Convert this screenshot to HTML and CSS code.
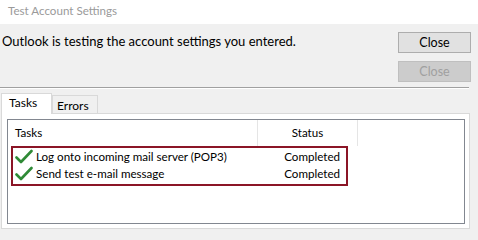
FILE: index.html
```html
<!DOCTYPE html>
<html lang="en">
<head>
  <meta charset="UTF-8" />
  <title>Test Account Settings</title>
  <link rel="stylesheet" href="styles.css">
</head>
<body>
  <div class="window">
    <div class="titlebar">Test Account Settings</div>

    <div class="top">
      <p class="message">Outlook is testing the account settings you entered.</p>
      <div class="buttons">
        <button class="btn">Close</button>
        <button class="btn" disabled>Close</button>
      </div>
    </div>

    <div class="separator"></div>

    <div class="tabs">
      <div class="tab active">Tasks</div>
      <div class="tab">Errors</div>
    </div>

    <div class="panel">
      <div class="list">
        <div class="list-header">
          <div class="col col-task">Tasks</div>
          <div class="col col-status">Status</div>
        </div>
        <div class="results">
          <div class="row">
            <span class="task">
              <svg class="check" width="18" height="16" viewBox="0 0 18 16">
                <path d="M1.5 8.5 L6 13 L16.5 2" fill="none" stroke="#2f8a36" stroke-width="2.6" stroke-linecap="round" stroke-linejoin="round"/>
              </svg>
              Log onto incoming mail server (POP3)
            </span>
            <span class="status">Completed</span>
          </div>
          <div class="row">
            <span class="task">
              <svg class="check" width="18" height="16" viewBox="0 0 18 16">
                <path d="M1.5 8.5 L6 13 L16.5 2" fill="none" stroke="#2f8a36" stroke-width="2.6" stroke-linecap="round" stroke-linejoin="round"/>
              </svg>
              Send test e-mail message
            </span>
            <span class="status">Completed</span>
          </div>
        </div>
      </div>
    </div>
  </div>
</body>
</html>
```

FILE: styles.css
```css
body {
  margin: 0;
  background: #f0f0f0;
  font-family: Lato, 'Noto Sans', sans-serif;
  font-size: 11.6px;
  color: #000;
}

.window {
  width: 478px;
  height: 240px;
  overflow: hidden;
}

.titlebar {
  height: 24px;
  line-height: 21px;
  background: #fff;
  color: #9a9a9a;
  padding-left: 8px;
  font-size: 11.6px;
}

.top {
  display: flex;
  justify-content: space-between;
  height: 63px;
  padding-right: 7px;
}

.message {
  margin: 0;
  padding: 8px 0 0 2px;
  line-height: 18px;
  font-size: 13px;
}

.buttons {
  display: flex;
  flex-direction: column;
  gap: 8px;
  padding-top: 8px;
}

.btn {
  width: 73px;
  height: 21px;
  padding: 0;
  font-family: inherit;
  font-size: 12.5px;
  background: #e1e1e1;
  border: 1px solid #adadad;
  color: #000;
}

.btn:disabled {
  background: #cccccc;
  border-color: #bfbfbf;
  color: #a0a0a0;
}

.separator {
  width: 469px;
  border-top: 1px solid #a0a0a0;
  border-bottom: 1px solid #fff;
}

.tabs {
  display: flex;
  align-items: flex-end;
  height: 24px;
  padding-left: 1px;
}

.tab {
  width: 40px;
  height: 17px;
  padding: 0 0 0 4px;
  line-height: 19px;
  font-size: 12px;
  border: 1px solid #d9d9d9;
  border-bottom: none;
  background: #f0f0f0;
}

.tab.active {
  height: 20px;
  width: 42px;
  padding: 0 0 0 7px;
  line-height: 17px;
  background: #fff;
  position: relative;
  top: 1px;
  z-index: 1;
}

.panel {
  width: 458px;
  height: 105px;
  margin-left: 1px;
  padding: 5px 4px 4px 5px;
  background: #fff;
  border: 1px solid #d9d9d9;
}

.list {
  height: 103px;
  border: 1px solid #828790;
  background: #fff;
}

.list-header {
  display: flex;
  height: 26px;
  line-height: 25px;
}

.col {
  border-right: 1px solid #e5e5e5;
}

.col-task {
  width: 242px;
  padding-left: 7px;
}

.col-status {
  width: 99px;
  text-align: center;
}

.results {
  width: 333px;
  margin-left: 3px;
  padding-bottom: 2px;
  border: 2px solid #8b1526;
}

.row {
  display: flex;
  justify-content: space-between;
  height: 17px;
  line-height: 17px;
  padding-right: 6px;
}

.task {
  display: flex;
  align-items: center;
  gap: 3px;
  padding-left: 2px;
}
```
